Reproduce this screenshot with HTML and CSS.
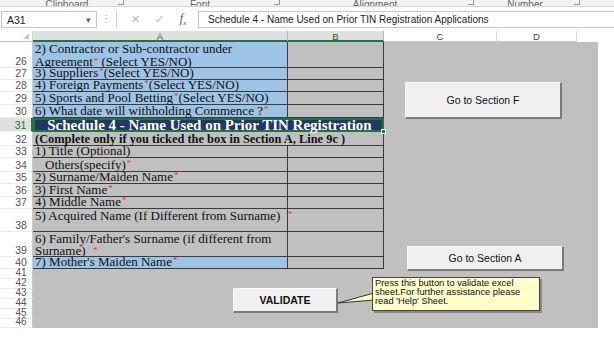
FILE: index.html
```html
<!DOCTYPE html>
<html>
<head>
<meta charset="utf-8">
<title>Schedule 4</title>
<link rel="stylesheet" href="styles.css">
</head>
<body>
<div class="ribbon">
  <div class="grp g1"><span class="glabel">Clipboard</span><span class="launch"></span></div>
  <div class="grp g2"><span class="glabel">Font</span><span class="launch"></span></div>
  <div class="grp g3"><span class="glabel">Alignment</span><span class="launch"></span></div>
  <div class="grp g4"><span class="glabel">Number</span><span class="launch"></span></div>
</div>
<div class="fbar">
  <div class="namebox"><span>A31</span><span class="dd">&#9662;</span></div>
  <div class="dots">&#8942;</div>
  <div class="fxicons"><span class="ic">&#10005;</span><span class="ic">&#10003;</span><span class="fx">f<sub>x</sub></span></div>
  <div class="finput">Schedule 4 - Name Used on Prior TIN Registration Applications</div>
</div>
<div class="sheet">
  <div class="corner"><span class="tri"></span></div>
  <div class="ch sel">A</div>
  <div class="ch sel">B</div>
  <div class="chrest"><div class="ch hc">C</div><div class="ch hd">D</div><div class="ch he"></div></div>

  <div class="right"></div>
  <div class="bottom"></div>

  <div class="rn">26</div><div class="c blue wrap">2) Contractor or Sub-contractor under<br>Agreement<span class="st">*</span> (Select YES/NO)</div><div class="c g"></div>
  <div class="rn">27</div><div class="c blue">3) Suppliers<span class="st">*</span> (Select YES/NO)</div><div class="c g"></div>
  <div class="rn">28</div><div class="c blue">4) Foreign Payments<span class="st">*</span> (Select YES/NO)</div><div class="c g"></div>
  <div class="rn">29</div><div class="c blue">5) Sports and Pool Betting<span class="st">*</span> (Select YES/NO)</div><div class="c g"></div>
  <div class="rn">30</div><div class="c blue">6) What date will withholding Commence ?<span class="st">*</span></div><div class="c g"></div>
  <div class="rn rsel">31</div><div class="c title">Schedule 4 - Name Used on Prior TIN Registration<span class="handle"></span></div>
  <div class="rn">32</div><div class="c g span2 bold">(Complete only if you ticked the box in Section A, Line 9c )</div>
  <div class="rn">33</div><div class="c g">1) Title (Optional)</div><div class="c g"></div>
  <div class="rn">34</div><div class="c g indent">Others(specify) <span class="st">*</span></div><div class="c g"></div>
  <div class="rn">35</div><div class="c g">2) Surname/Maiden Name<span class="st">*</span></div><div class="c g"></div>
  <div class="rn">36</div><div class="c g">3) First Name <span class="st">*</span></div><div class="c g"></div>
  <div class="rn">37</div><div class="c g">4) Middle Name <span class="st">*</span></div><div class="c g"></div>
  <div class="rn">38</div><div class="c g top">5) Acquired Name (If Different from Surname) &nbsp;<span class="st">*</span></div><div class="c g"></div>
  <div class="rn">39</div><div class="c g wrap2">6) Family/Father's Surname (if different from<br>Surname) &nbsp;<span class="st">*</span></div><div class="c g"></div>
  <div class="rn">40</div><div class="c blue">7) Mother's Maiden Name <span class="st">*</span></div><div class="c g"></div>
  <div class="rn sm">41</div>
  <div class="rn sm">42</div>
  <div class="rn sm">43</div>
  <div class="rn sm">44</div>
  <div class="rn sm">45</div>
  <div class="rn sm">46</div>

  <button class="btn btn-f">Go to Section F</button>
  <button class="btn btn-a">Go to Section A</button>
  <button class="btn btn-v">VALIDATE</button>
  <svg class="pointer" width="40" height="20" viewBox="0 0 40 20"><polygon points="2,15 38,5 38,12" fill="#ffffcc" stroke="#333" stroke-width="1"/></svg>
  <div class="callout">Press this button to validate excel<br>sheet.For further assistance please<br>read 'Help' Sheet.</div>
</div>
</body>
</html>
```
FILE: styles.css
```css
* { box-sizing: border-box; }
html, body { margin: 0; padding: 0; background: #ffffff; }
body { width: 614px; height: 345px; overflow: hidden; font-family: "Liberation Sans", Arial, sans-serif; }

.ribbon { display: flex; height: 7px; overflow: hidden; border-bottom: 1px solid #d4d4d4; background: #f3f3f3; }
.grp { display: flex; align-items: flex-end; height: 6px; overflow: hidden; }
.glabel { flex: 1; text-align: center; font-size: 10px; line-height: 12px; color: #666; transform: translateY(5px); }
.launch { width: 6px; height: 6px; border-right: 1px solid #999; border-bottom: 1px solid #999; margin: 0 2px 1px 0; }
.g1 { width: 126px; padding-left: 16px; }
.g2 { width: 156px; }
.g3 { width: 194px; }
.g4 { width: 106px; }

.fbar { display: flex; align-items: center; height: 24px; padding-top: 1px; }
.namebox { width: 96px; height: 17px; margin-left: 1px; border: 1px solid #c6c6c6; display: flex; align-items: center; justify-content: space-between; padding: 0 5px; font-size: 10.5px; color: #222; }
.dd { font-size: 9px; color: #666; }
.dots { width: 19px; text-align: center; color: #aaa; font-size: 11px; }
.fxicons { width: 82px; height: 17px; border-left: 1px solid #d0d0d0; display: flex; align-items: center; justify-content: space-around; padding: 0 4px 0 6px; color: #b8b8b8; font-size: 11px; }
.fx { color: #555; font-family: "Liberation Serif", serif; font-style: italic; font-size: 12px; }
.fx sub { font-size: 7px; }
.finput { flex: 1; height: 17px; border: 1px solid #c6c6c6; border-right: 0; padding-left: 9px; font-size: 10px; line-height: 15px; color: #222; white-space: nowrap; }

.sheet { position: relative; display: grid; grid-template-columns: 33px 255px 96px 214px; grid-template-rows: 11px 26px 12px 12px 13px 13px 14px 14px 12px 14px 12px 13px 12px 23px 25px 12px 10px 10px 10px 10px 10px 9px; }

.corner { grid-column: 1; grid-row: 1; position: relative; border-right: 1px solid #d0d0d0; border-bottom: 1px solid #c0c0c0; }
.tri { position: absolute; right: 3px; bottom: 2px; width: 0; height: 0; border-left: 6px solid transparent; border-bottom: 6px solid #c8c8c8; }
.ch { font-size: 9.5px; line-height: 11px; text-align: center; color: #444; border-right: 1px solid #d8d8d8; border-bottom: 1px solid #c6c6c6; }
.sel { background: #e0e0e0; color: #1d5c36; border-bottom: 2px solid #217346; border-right: 1px solid #b8b8b8; }
.chrest { grid-column: 4; grid-row: 1; display: flex; }
.hc { width: 113px; }
.hd { width: 80px; }
.he { width: 21px; border-right: 0; border-bottom: 0; }

.right { grid-column: 4; grid-row: 2 / 23; background: #c0c0c0; }
.bottom { grid-column: 2 / 4; grid-row: 17 / 23; background: #c0c0c0; }

.rn { grid-column: 1; font-size: 10.5px; color: #555; padding-left: 10px; display: flex; align-items: flex-end; justify-content: center; line-height: 11px; border-right: 1px solid #c8c8c8; border-bottom: 1px solid #ececec; }
.rn.sm { font-size: 10px; line-height: 10px; }
.rsel { background: #e0e0e0; color: #217346; border-right: 2px solid #217346; }

.c { font-family: "Liberation Serif", "Times New Roman", serif; font-size: 13px; line-height: 12px; color: #111; padding-left: 2px; white-space: nowrap; display: flex; align-items: flex-end; border-right: 1px solid #3c3c3c; border-bottom: 1px solid #3c3c3c; }
.c.g { background: #c0c0c0; }
.c.blue { background: #9dc3e6; }
.c.wrap { display: block; line-height: 13px; }
.c.wrap2 { display: block; line-height: 12px; padding-top: 1px; }
.c.top { align-items: flex-start; padding-top: 1px; }
.c.indent { padding-left: 12px; }
.span2 { grid-column: span 2; }
.bold { font-weight: bold; font-size: 12.4px; }
.st { color: #e8294e; font-size: 9px; position: relative; top: -2px; margin-left: 1px; }

.title { grid-column: span 2; position: relative; background: #1f3864; color: #ffffff; font-weight: bold; font-size: 15px; line-height: 13px; justify-content: center; align-items: center; border: 2px solid #217346; }
.handle { position: absolute; right: -4px; bottom: -4px; width: 5px; height: 5px; background: #217346; border: 1px solid #fff; }

.btn { position: absolute; margin: 0; padding: 0; background: #f0f0f0; border: 1px solid #f8f8f8; border-right: 2px solid #7a7a7a; border-bottom: 2px solid #7a7a7a; font-family: "Liberation Sans", Arial, sans-serif; font-size: 10.5px; color: #111; }
.btn-f { left: 405px; top: 51px; width: 157px; height: 37px; }
.btn-a { left: 407px; top: 215px; width: 157px; height: 25px; }
.btn-v { left: 233px; top: 257px; width: 105px; height: 25px; font-weight: bold; }

.pointer { position: absolute; left: 336px; top: 257px; }
.callout { position: absolute; left: 372px; top: 246px; width: 168px; height: 34px; background: #ffffcc; border: 1px solid #444; box-shadow: 2px 2px 0 #8a8a8a; padding: 1px 0 0 2px; font-size: 9.3px; line-height: 9px; color: #111; }
```
